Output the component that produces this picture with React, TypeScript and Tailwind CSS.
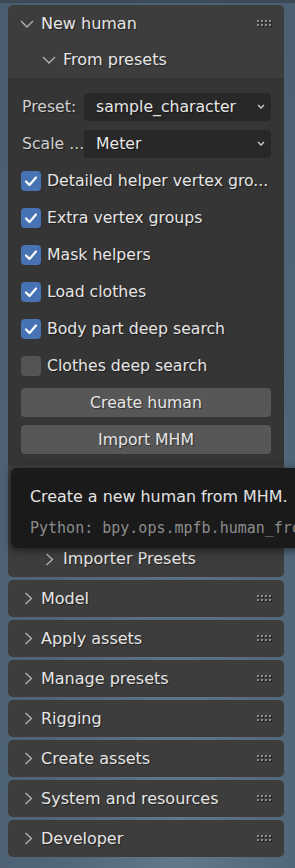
import React from 'react';

const shadow = '[text-shadow:1px_1px_1px_rgba(0,0,0,0.45)]';

function ChevronDown() {
  return (
    <svg width="14" height="8" viewBox="0 0 14 8" className="ml-[12px] mr-[7px] shrink-0">
      <polyline points="1,1 7,7 13,1" fill="none" stroke="#b4b4b4" strokeWidth="1.3" />
    </svg>
  );
}

function ChevronRight({ className = 'ml-[16px] mr-[8px]' }: { className?: string }) {
  return (
    <svg width="9" height="13" viewBox="0 0 9 13" className={`${className} shrink-0`}>
      <polyline points="1.5,1 7.5,6.5 1.5,12" fill="none" stroke="#b4b4b4" strokeWidth="1.3" />
    </svg>
  );
}

function Grip() {
  const cols = [0, 4, 8, 12];
  const rows = [0, 4];
  return (
    <svg width="15" height="7" viewBox="0 0 15 7" className="ml-auto mr-[12px] shrink-0">
      {rows.map((y) =>
        cols.map((x) => (
          <g key={`${x}-${y}`}>
            <rect x={x + 1} y={y + 1} width="2" height="2" fill="#1e1e1e" />
            <rect x={x} y={y} width="2" height="2" fill="#8e8e8e" />
          </g>
        )),
      )}
    </svg>
  );
}

function Check({ checked, label }: { checked: boolean; label: string }) {
  return (
    <div className="flex h-[29px] items-center">
      <div
        className={`flex h-[20px] w-[20px] items-center justify-center rounded-[4px] ${
          checked ? 'bg-[#4772b3]' : 'bg-[#545454]'
        }`}
      >
        {checked && (
          <svg width="14" height="12" viewBox="0 0 14 12">
            <polyline
              points="2,6.5 5.5,10 12,2.5"
              fill="none"
              stroke="#ffffff"
              strokeWidth="2.2"
              strokeLinecap="round"
              strokeLinejoin="round"
            />
          </svg>
        )}
      </div>
      <span className={`ml-[6px] whitespace-nowrap text-[15.7px] text-[#e6e6e6] ${shadow}`}>{label}</span>
    </div>
  );
}

function Dropdown({ label, value }: { label: string; value: string }) {
  return (
    <div className="flex h-[29px] items-center">
      <span className={`w-[63px] pl-px whitespace-nowrap text-[15.7px] text-[#cfcfcf] ${shadow}`}>{label}</span>
      <div className="flex h-[28px] flex-1 items-center rounded-[4px] bg-[#282828] pl-[12px] pr-[6px]">
        <span className={`text-[15.7px] text-[#e6e6e6] ${shadow}`}>{value}</span>
        <svg width="8" height="5" viewBox="0 0 8 5" className="ml-auto">
          <polyline points="1,1 4,4 7,1" fill="none" stroke="#d0d0d0" strokeWidth="1.3" />
        </svg>
      </div>
    </div>
  );
}

function Button({ children }: { children: string }) {
  return (
    <div
      className={`flex h-[29px] items-center justify-center rounded-[4px] bg-[#575757] text-[15.7px] text-[#e6e6e6] ${shadow}`}
    >
      {children}
    </div>
  );
}

const collapsed = [
  'Model',
  'Apply assets',
  'Manage presets',
  'Rigging',
  'Create assets',
  'System and resources',
  'Developer',
];

export default function App() {
  return (
    <div className="relative h-[868px] w-[295px] overflow-hidden bg-[radial-gradient(ellipse_at_60%_95%,#62798a_0%,#52677a_45%,#4a5d6f_100%)] font-['DejaVu_Sans',sans-serif]">
      <div className="h-[3px] bg-[#3c4957]" />
      <div className="flex flex-col gap-[3px] pl-2 pr-[11px] pt-[2px]">
        <div className="overflow-hidden rounded-[5px] bg-[#3d3d3d]">
          <div className="flex h-[37px] items-center">
            <ChevronDown />
            <span className={`text-[16px] text-[#e6e6e6] ${shadow}`}>New human</span>
            <Grip />
          </div>
          <div className="flex h-[36px] items-center pl-[22px]">
            <ChevronDown />
            <span className={`-ml-[12px] pl-[12px] text-[16px] text-[#e6e6e6] ${shadow}`}>From presets</span>
          </div>
          <div className="flex flex-col gap-[8px] bg-[#353535] px-[13px] pb-[11px] pt-[14px]">
            <Dropdown label="Preset:" value="sample_character" />
            <Dropdown label="Scale ..." value="Meter" />
            <Check checked label="Detailed helper vertex gro..." />
            <Check checked label="Extra vertex groups" />
            <Check checked label="Mask helpers" />
            <Check checked label="Load clothes" />
            <Check checked label="Body part deep search" />
            <Check checked={false} label="Clothes deep search" />
            <Button>Create human</Button>
            <Button>Import MHM</Button>
          </div>
          <div className="h-[76px]" />
          <div className="flex h-[36px] items-center">
            <ChevronRight className="ml-[37px] mr-[9px]" />
            <span className={`text-[16px] text-[#e6e6e6] ${shadow}`}>Importer Presets</span>
          </div>
        </div>
        {collapsed.map((name) => (
          <div key={name} className="flex h-[37px] items-center rounded-[5px] bg-[#3d3d3d]">
            <ChevronRight />
            <span className={`text-[16px] text-[#e6e6e6] ${shadow}`}>{name}</span>
            <Grip />
          </div>
        ))}
      </div>

      <div className="absolute left-[11px] top-[468px] flex h-[80px] w-[320px] flex-col rounded-[6px] bg-[#1a1a1a] pl-[19px] pt-[17px] shadow-[0_2px_8px_rgba(0,0,0,0.55)]">
        <span className="whitespace-nowrap text-[15.9px] leading-[24px] text-[#e2e2e2]">
          Create a new human from MHM.
        </span>
        <span className="mt-[7px] whitespace-nowrap font-['DejaVu_Sans_Mono',monospace] text-[15px] leading-[24px] text-[#8c8c8c]">
          Python: bpy.ops.mpfb.human_from_mhm()
        </span>
      </div>
    </div>
  );
}
